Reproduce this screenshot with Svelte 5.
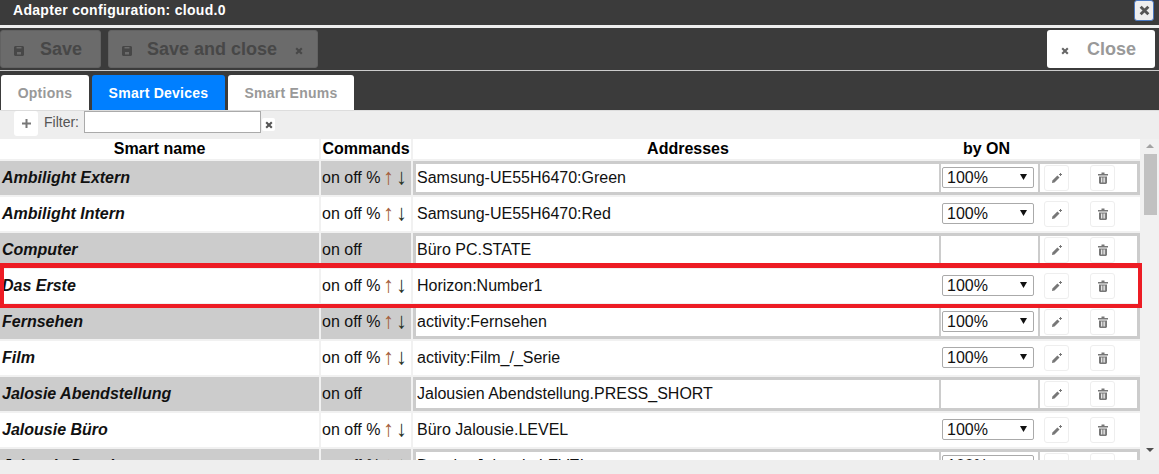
<script>
  const full = true;
  // gray/white striping comes from the row index
  const devices = [
    { name: "Ambilight Extern", full, address: "Samsung-UE55H6470:Green", on: "100%" },
    { name: "Ambilight Intern", full, address: "Samsung-UE55H6470:Red", on: "100%" },
    { name: "Computer", full: false, address: "Büro PC.STATE", on: "" },
    { name: "Das Erste", full, address: "Horizon:Number1", on: "100%" },
    { name: "Fernsehen", full, address: "activity:Fernsehen", on: "100%" },
    { name: "Film", full, address: "activity:Film_/_Serie", on: "100%" },
    { name: "Jalosie Abendstellung", full: false, address: "Jalousien Abendstellung.PRESS_SHORT", on: "" },
    { name: "Jalousie Büro", full, address: "Büro Jalousie.LEVEL", on: "100%" },
    { name: "Jalousie Dusche", full, address: "Dusche Jalousie.LEVEL", on: "100%" }
  ];
  const tabs = ["Options", "Smart Devices", "Smart Enums"];
</script>

{#snippet disk()}
  <svg class="icon" viewBox="0 0 10 10" width="10" height="10">
    <path d="M1 0h8l1 1v8l-1 1H1L0 9V1zM2.500 1v1.500h5V1zM3 6v2.500h4V6z" fill="currentColor" fill-rule="evenodd" />
  </svg>
{/snippet}

{#snippet cross(size)}
  <svg class="icon" viewBox="0 0 10 10" width={size} height={size}>
    <path d="M1.500 1.500l7 7M8.500 1.500l-7 7" stroke="currentColor" stroke-width="2.600" fill="none" />
  </svg>
{/snippet}

<div class="dialog">
  <header class="titlebar">
    <span class="title">Adapter configuration: cloud.0</span>
    <button class="title-close">{@render cross(11)}</button>
  </header>

  <div class="toolbar">
    <button class="btn disabled save">{@render disk()}<span>Save</span></button>
    <button class="btn disabled save-close">{@render disk()}<span>Save and close</span>{@render cross(8)}</button>
    <button class="btn close">{@render cross(8)}<span>Close</span></button>
  </div>

  <nav class="tabs">
    {#each tabs as tab, i}
      <button class="tab" class:active={i === 1}>{tab}</button>
    {/each}
  </nav>

  <div class="filter">
    <button class="add">
      <svg viewBox="0 0 9 9" width="9" height="9"><path d="M4.500 0v9M0 4.500h9" stroke="#777" stroke-width="2" /></svg>
    </button>
    <label for="filter">Filter:</label>
    <input id="filter" class="filter-input" />
    <button class="clear">{@render cross(8)}</button>
  </div>

  <div class="body">
    <div class="table">
      <div class="row head">
        <div class="name-col">Smart name</div>
        <div class="cmd-col">Commands</div>
        <div class="head-rest">
          <span>Addresses</span>
          <span>by ON</span>
        </div>
      </div>

      {#each devices as d, i}
        <div class="row" class:odd={i % 2 === 0}>
          <div class="name-col cell-name">{d.name}</div>
          <div class="cmd-col cell-cmd">
            on off{#if d.full}&nbsp;% <span class="arrow-text up">↑</span><span class="arrow-text down">↓</span>{/if}
          </div>
          <div class="fields">
            <div class="field"><input class="address" value={d.address} readonly /></div>
            <div class="field by-on">
              {#if d.on}
                <div class="select">
                  <select><option>{d.on}</option></select>
                </div>
              {/if}
            </div>
            <div class="field actions">
              <button class="action" aria-label="edit">
                <svg viewBox="0 0 12 12" width="12" height="12">
                  <path d="M1 11l.4-2.500 5-5 2.100 2.100-5 5z" fill="#777" />
                  <path d="M9.500 1v3M8 2.500h3" stroke="#777" stroke-width="1" />
                </svg>
              </button>
              <button class="action" aria-label="delete">
                <svg viewBox="0 0 12 12" width="12" height="12">
                  <path d="M1 2h10v1.500H1zM4.500.5h3V2h-3z" fill="#777" />
                  <path d="M2 4.500h8V11l-1 1H3l-1-1zM4 5.500v5h.8v-5zM5.700 5.500v5h.8v-5zM7.300 5.500v5h.8v-5z" fill="#777" fill-rule="evenodd" />
                </svg>
              </button>
            </div>
          </div>
        </div>
      {/each}

      <div class="highlight"></div>
    </div>

    <div class="scrollbar">
      <span class="arrow up-arrow"></span>
      <span class="thumb"></span>
      <span class="arrow down-arrow"></span>
    </div>
  </div>
</div>

<style>
  :global(body) {
    margin: 0;
    overflow: hidden;
  }

  .dialog {
    height: 474px;
    display: flex;
    flex-direction: column;
    background: #eeeeee;
    font-family: "Liberation Sans", Arial, sans-serif;
    font-size: 16px;
    color: #111;
    overflow: hidden;
  }

  button {
    font-family: inherit;
    padding: 0;
    cursor: pointer;
  }

  .icon {
    display: block;
    flex: none;
  }

  .titlebar {
    height: 25px;
    box-sizing: border-box;
    flex: none;
    background: #3b3b3b;
    display: flex;
    align-items: center;
    justify-content: space-between;
    padding: 0 5px 0 13px;
  }

  .title {
    color: #fff;
    font-size: 14px;
    letter-spacing: 0.3px;
    font-weight: bold;
    margin-top: -5px;
  }

  .title-close {
    width: 20px;
    height: 21px;
    margin-top: -4px;
    background: #eee;
    color: #555;
    border: 1px solid #4a78c0;
    border-radius: 3px;
    display: flex;
    align-items: center;
    justify-content: center;
  }

  .toolbar {
    flex: none;
    height: 43px;
    margin-top: 3px;
    box-sizing: border-box;
    background: #3b3b3b;
    border-bottom: 1px solid #ccc;
    padding: 2px 4px 0 0;
    display: flex;
    gap: 7px;
  }

  .btn {
    height: 38px;
    border: 0;
    border-radius: 3px;
    display: flex;
    align-items: center;
    font-size: 18px;
    font-weight: bold;
    box-sizing: border-box;
  }

  .btn .icon {
    margin-top: 4px;
  }

  .disabled {
    background: #6b6b6b;
    color: #474747;
    border: 1px solid #626262;
  }

  .save {
    width: 101px;
    padding-left: 13px;
    gap: 16px;
  }

  .save-close {
    width: 210px;
    padding-left: 13px;
    gap: 15px;
  }

  .save-close .icon:last-child {
    margin-left: 3px;
  }

  .close {
    width: 108px;
    margin-left: auto;
    background: #fff;
    color: #999;
    padding-left: 14px;
    gap: 18px;
  }

  .close .icon {
    color: #666;
  }

  .tabs {
    flex: none;
    height: 39px;
    background: #3b3b3b;
    border-bottom: 1px solid #ddd;
    display: flex;
    align-items: flex-end;
    gap: 3px;
    padding-left: 1px;
  }

  .tab {
    height: 35px;
    border: 0;
    border-radius: 3px 3px 0 0;
    background: #fff;
    color: #999;
    font-size: 14px;
    letter-spacing: 0.25px;
    font-weight: bold;
    width: 88px;
  }

  .tab:nth-child(2) {
    width: 133px;
  }

  .tab:nth-child(3) {
    width: 126px;
  }

  .active {
    background: #007fff;
    color: #fff;
  }

  .filter {
    flex: none;
    height: 28px;
    padding-left: 14px;
    display: flex;
    align-items: flex-start;
  }

  .add {
    width: 24px;
    height: 25px;
    background: #fff;
    border: 0;
    border-radius: 3px;
    display: flex;
    align-items: center;
    justify-content: center;
  }

  label {
    font-size: 14px;
    color: #555;
    margin: 3px 5px 0 6px;
  }

  .filter-input {
    width: 177px;
    height: 22px;
    box-sizing: border-box;
    border: 1px solid #aaa;
    background: #fff;
    padding: 0;
  }

  .clear {
    width: 13px;
    height: 13px;
    margin: 7px 0 0 1px;
    background: #fff;
    color: #555;
    border: 0;
    border-radius: 2px;
    display: flex;
    align-items: center;
    justify-content: center;
  }

  .body {
    flex: none;
    height: 321px;
    display: flex;
    overflow: hidden;
    background: #f1f1f1;
  }

  .table {
    position: relative;
    width: 1143px;
    flex: none;
    overflow: hidden;
  }

  .row {
    display: grid;
    grid-template-columns: 319px 90px 727px;
    column-gap: 2px;
    height: 34px;
    margin-bottom: 2px;
    line-height: 34px;
    white-space: nowrap;
  }

  .head {
    height: 20px;
    line-height: 20px;
    margin-bottom: 2px;
    font-weight: bold;
    text-align: center;
    color: #000;
  }

  .head > div {
    background: #fff;
  }

  .head-rest {
    display: grid;
    grid-template-columns: 550px 45px;
    white-space: nowrap;
  }

  .cell-name {
    font-style: italic;
    font-weight: bold;
    padding-left: 2px;
    background: #fff;
    box-sizing: border-box;
  }

  .cell-cmd {
    background: #fff;
    padding-left: 1px;
    box-sizing: border-box;
  }

  .odd .cell-name,
  .odd .cell-cmd,
  .odd .fields {
    background: #cccccc;
  }

  .arrow-text {
    display: inline-block;
    width: 13px;
    font-size: 22px;
    line-height: 16px;
    text-align: center;
    vertical-align: -1px;
  }

  .up {
    margin-left: -3px;
    color: #a5603c;
  }

  .down {
    color: #26331f;
  }

  .fields {
    background: #fff;
    padding: 3px;
    box-sizing: border-box;
    display: grid;
    grid-template-columns: 523px 97px 97px;
    column-gap: 2px;
  }

  .field {
    background: #fff;
    min-width: 0;
  }

  .address {
    display: block;
    width: 100%;
    height: 28px;
    box-sizing: border-box;
    border: 0;
    outline: 0;
    padding: 0 1px;
    background: transparent;
    font: 16px "Liberation Sans", Arial, sans-serif;
    color: #111;
  }

  .by-on {
    padding: 3px 0 0 1px;
  }

  .select {
    position: relative;
    width: 92px;
    height: 21px;
  }

  .select::after {
    content: "";
    position: absolute;
    right: 7px;
    top: 7px;
    width: 7px;
    height: 6px;
    background: #111;
    clip-path: polygon(0 0, 100% 0, 50% 100%);
  }

  select {
    display: block;
    width: 100%;
    height: 100%;
    box-sizing: border-box;
    border: 1px solid #aaa;
    border-radius: 2px;
    background: #fff;
    padding: 0 0 0 4px;
    appearance: none;
    font: 16px "Liberation Sans", Arial, sans-serif;
    color: #111;
  }

  .actions {
    display: flex;
    gap: 21px;
    padding: 1px 0 0 4px;
    box-sizing: border-box;
  }

  .action {
    width: 25px;
    height: 26px;
    background: #fff;
    border: 1px solid #eeeeee;
    border-radius: 3px;
    display: flex;
    align-items: center;
    justify-content: center;
    box-sizing: border-box;
  }

  .highlight {
    position: absolute;
    left: 0;
    top: 124px;
    width: 1142px;
    height: 45px;
    box-sizing: border-box;
    border: 4px solid #ed1c24;
    border-top-width: 5px;
    pointer-events: none;
  }

  .scrollbar {
    flex: 1;
    position: relative;
    background: #f1f1f1;
  }

  .thumb {
    position: absolute;
    left: 1px;
    right: 2px;
    top: 15px;
    height: 61px;
    background: #c1c1c1;
  }

  .arrow {
    position: absolute;
    left: 3px;
    width: 8px;
    height: 4px;
  }

  .up-arrow {
    top: 5px;
    background: #a3a3a3;
    clip-path: polygon(50% 0, 100% 100%, 0 100%);
  }

  .down-arrow {
    top: 309px;
    background: #505050;
    clip-path: polygon(0 0, 100% 0, 50% 100%);
  }
</style>
